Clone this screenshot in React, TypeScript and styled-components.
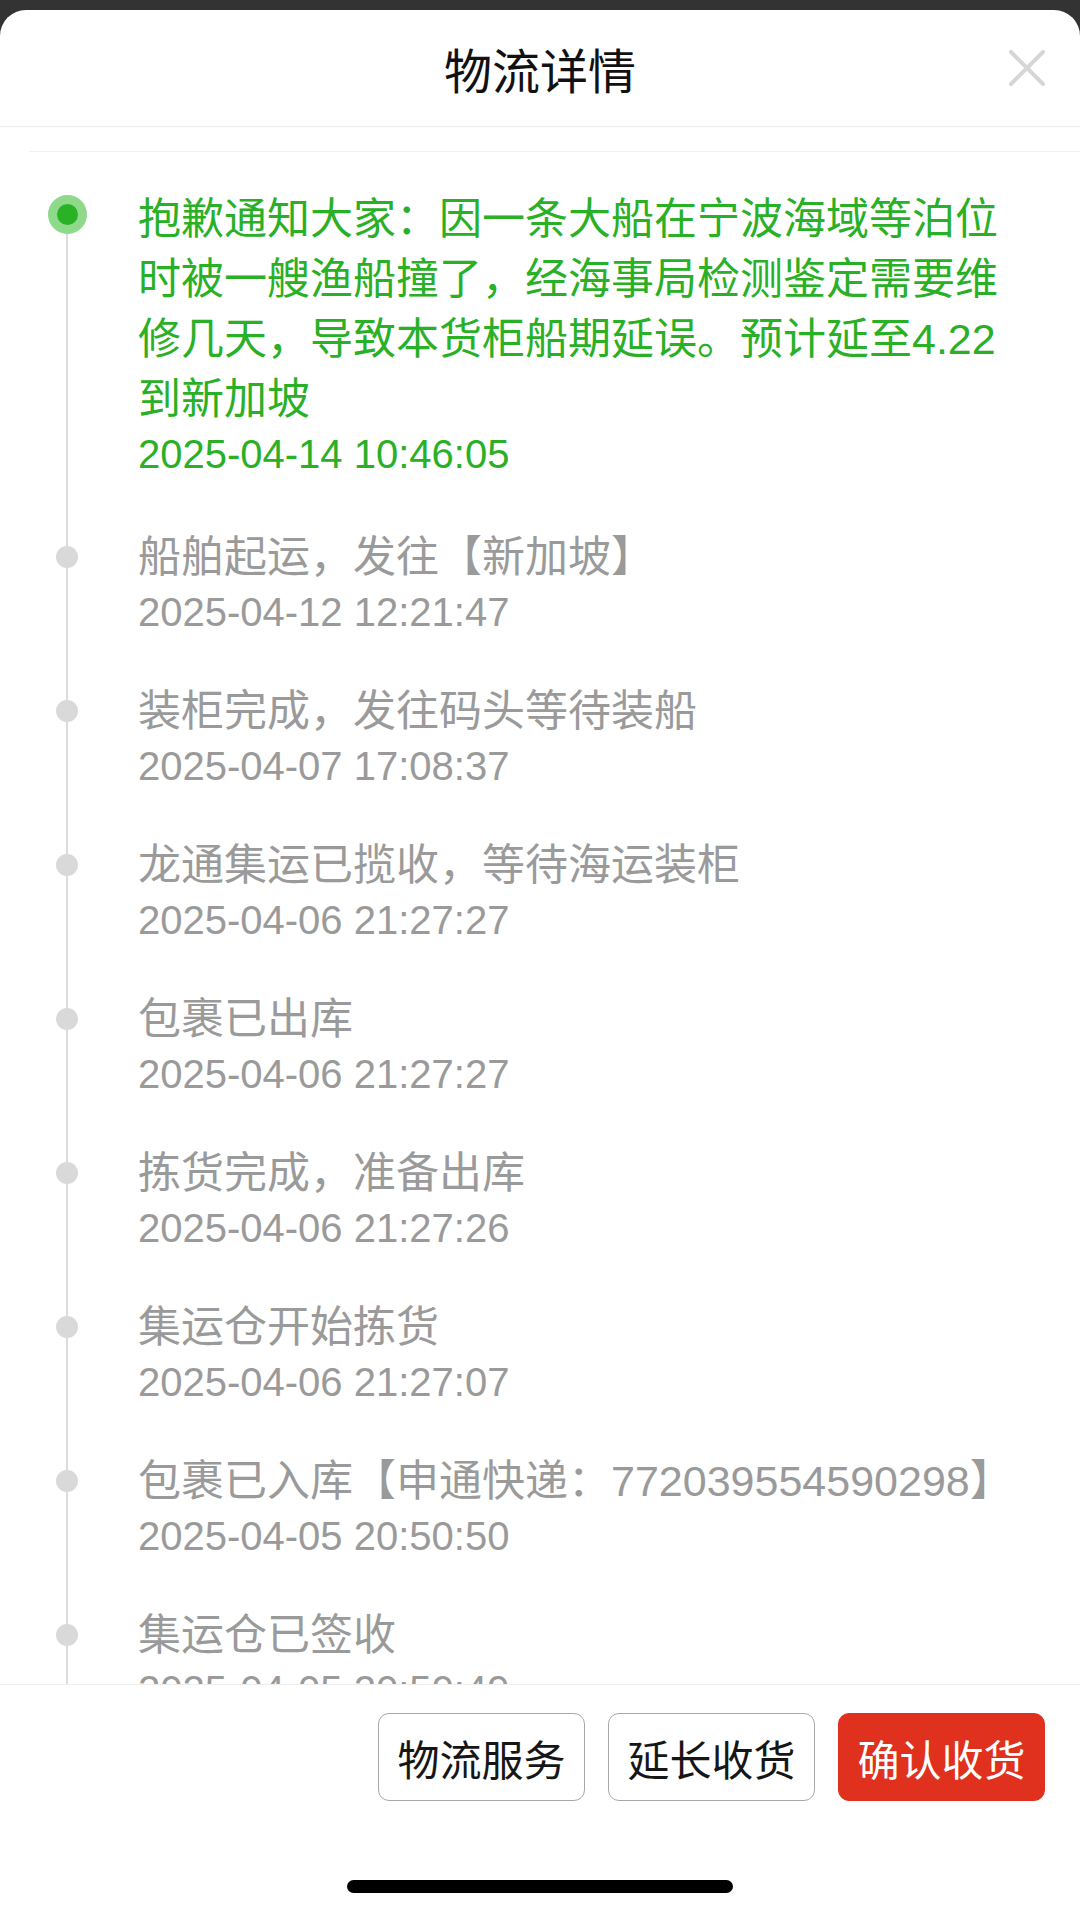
import React from "react";
import styled, { createGlobalStyle } from "styled-components";

const GlobalStyle = createGlobalStyle`
  html, body {
    margin: 0;
    padding: 0;
    background: #333333;
  }
  * {
    box-sizing: border-box;
  }
`;

const FONT = `"Liberation Sans", "Noto Sans CJK SC", sans-serif`;

const Screen = styled.div`
  width: 1080px;
  height: 1913px;
  padding-top: 10px;
  background: #333333;
  font-family: ${FONT};
  overflow: hidden;
`;

const Sheet = styled.div`
  height: 1903px;
  background: #ffffff;
  border-radius: 26px 26px 0 0;
  display: flex;
  flex-direction: column;
  overflow: hidden;
`;

const Header = styled.header`
  height: 117px;
  flex-shrink: 0;
  display: grid;
  grid-template-columns: 1fr auto 1fr;
  align-items: center;
  border-bottom: 1px solid #ececec;
`;

const Title = styled.h1`
  grid-column: 2;
  margin: 0;
  font-size: 48px;
  font-weight: 400;
  color: #111111;
`;

const CloseButton = styled.button`
  grid-column: 3;
  justify-self: end;
  margin-right: 33px;
  width: 40px;
  height: 40px;
  padding: 0;
  border: 0;
  background: transparent;
  display: flex;
  align-items: center;
  justify-content: center;
`;

const SubDivider = styled.div`
  height: 25px;
  flex-shrink: 0;
  margin-left: 29px;
  border-bottom: 1px solid #f0f0f0;
`;

const List = styled.div`
  flex: 1;
  overflow: hidden;
  padding-top: 37px;
`;

const Item = styled.div<{ $active?: boolean }>`
  display: grid;
  grid-template-columns: 134px 1fr;
  column-gap: 4px;
  padding-right: 60px;
  color: ${(p) => (p.$active ? "#29b026" : "#9a9a9a")};
`;

const Rail = styled.div<{ $first?: boolean }>`
  position: relative;
  display: flex;
  justify-content: center;
  align-items: flex-start;

  &::before {
    content: "";
    position: absolute;
    left: 66px;
    width: 2px;
    top: ${(p) => (p.$first ? "30px" : "0")};
    bottom: 0;
    background: #dcdcdc;
  }
`;

const Dot = styled.span<{ $active?: boolean }>`
  position: relative;
  z-index: 1;
  width: ${(p) => (p.$active ? 39 : 22)}px;
  height: ${(p) => (p.$active ? 39 : 22)}px;
  margin-top: ${(p) => (p.$active ? 6 : 19)}px;
  border-radius: 50%;
  background: ${(p) => (p.$active ? "#2ab227" : "#d9d9d9")};
  border: ${(p) => (p.$active ? "9px solid #8fd98b" : "none")};
`;

const Content = styled.div<{ $active?: boolean }>`
  min-width: 0;
  padding-bottom: ${(p) => (p.$active ? 48 : 44)}px;
`;

const Text = styled.div`
  font-size: 43px;
  line-height: 60px;
  word-break: break-all;
`;

const Time = styled.div`
  font-size: 40px;
  line-height: 50px;
`;

const Footer = styled.footer`
  height: 229px;
  flex-shrink: 0;
  border-top: 1px solid #eeeeee;
  background: #ffffff;
  display: flex;
  flex-direction: column;
  align-items: stretch;
`;

const Actions = styled.div`
  display: flex;
  justify-content: flex-end;
  gap: 23px;
  padding: 28px 35px 0 0;
`;

const ActionButton = styled.button<{ $primary?: boolean }>`
  width: 207px;
  height: 88px;
  border-radius: 11px;
  border: 1px solid ${(p) => (p.$primary ? "#e0301e" : "#a8a8a8")};
  background: ${(p) => (p.$primary ? "#e0301e" : "#ffffff")};
  color: ${(p) => (p.$primary ? "#ffffff" : "#161616")};
  font-family: ${FONT};
  font-size: 42px;
  padding: 0;
  display: flex;
  align-items: center;
  justify-content: center;
`;

const HomeIndicator = styled.div`
  width: 386px;
  height: 13px;
  margin: 79px auto 0;
  border-radius: 7px;
  background: #000000;
`;

type Track = { text: string; time: string };

const tracks: Track[] = [
  {
    text: "抱歉通知大家：因一条大船在宁波海域等泊位时被一艘渔船撞了，经海事局检测鉴定需要维修几天，导致本货柜船期延误。预计延至4.22到新加坡",
    time: "2025-04-14 10:46:05",
  },
  { text: "船舶起运，发往【新加坡】", time: "2025-04-12 12:21:47" },
  { text: "装柜完成，发往码头等待装船", time: "2025-04-07 17:08:37" },
  { text: "龙通集运已揽收，等待海运装柜", time: "2025-04-06 21:27:27" },
  { text: "包裹已出库", time: "2025-04-06 21:27:27" },
  { text: "拣货完成，准备出库", time: "2025-04-06 21:27:26" },
  { text: "集运仓开始拣货", time: "2025-04-06 21:27:07" },
  { text: "包裹已入库【申通快递：772039554590298】", time: "2025-04-05 20:50:50" },
  { text: "集运仓已签收", time: "2025-04-05 20:50:49" },
];

const App: React.FC = () => {
  return (
    <>
      <GlobalStyle />
      <Screen>
        <Sheet>
          <Header>
            <Title>物流详情</Title>
            <CloseButton aria-label="关闭">
              <svg width="38" height="36" viewBox="0 0 38 36">
                <path
                  d="M3 2 L35 34 M35 2 L3 34"
                  stroke="#d6d6d6"
                  strokeWidth="4"
                  strokeLinecap="round"
                />
              </svg>
            </CloseButton>
          </Header>
          <SubDivider />

          <List>
            {tracks.map((t, i) => (
              <Item key={i} $active={i === 0}>
                <Rail $first={i === 0}>
                  <Dot $active={i === 0} />
                </Rail>
                <Content $active={i === 0}>
                  <Text>{t.text}</Text>
                  <Time>{t.time}</Time>
                </Content>
              </Item>
            ))}
          </List>

          <Footer>
            <Actions>
              <ActionButton>物流服务</ActionButton>
              <ActionButton>延长收货</ActionButton>
              <ActionButton $primary>确认收货</ActionButton>
            </Actions>
            <HomeIndicator />
          </Footer>
        </Sheet>
      </Screen>
    </>
  );
};

export default App;
